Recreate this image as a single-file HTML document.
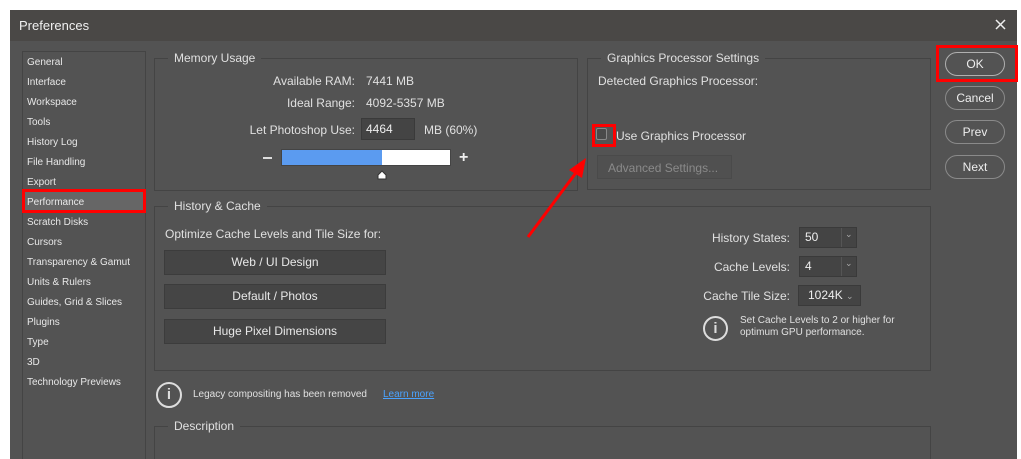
<!DOCTYPE html>
<html style="overflow:hidden;width:1021px;height:459px"><head><style>
*{box-sizing:border-box;margin:0;padding:0}
body{width:1021px;height:459px;background:#fff;position:relative;overflow:hidden;font-family:"Liberation Sans",sans-serif;font-size:12px;color:#e0e0e0}
.a{position:absolute}
.win{left:10px;top:10px;width:1007px;height:449px;background:#535353}
.title{left:10px;top:10px;width:1007px;height:31px;background:#4a4846;color:#f0f0f0;font-size:13px;padding:8px 0 0 9px}
.side{left:22px;top:51px;width:124px;height:420px;border:1px solid #444;background:#535353}
.side div{position:absolute;left:4px;font-size:10px;color:#e8e8e8}
.grp{border:1px solid #444;}
.lg{position:absolute;top:-8px;background:#535353;padding:0 6px;font-size:12px;color:#e0e0e0}
.btn{position:absolute;background:#454545;border:1px solid #3c3c3c;text-align:center;color:#e8e8e8;font-size:12px;padding-top:4px}
.rb{position:absolute;left:945px;width:60px;height:24px;border:1px solid #8a8a8a;border-radius:12px;text-align:center;padding-top:4px;color:#eee;font-size:12px}
.sel{position:absolute;height:21px;background:#444;border:1px solid #3a3a3a;font-size:12px;padding:2px 5px;color:#eee}
.r{text-align:right}
</style></head><body>
<div class="a win"></div>
<div class="a title">Preferences</div>
<svg class="a" style="left:995px;top:19px" width="11" height="11"><path d="M1 1L10 10M10 1L1 10" stroke="#eee" stroke-width="1.5"/></svg>
<div class="a side">
<div style="top:5px">General</div><div style="top:25px">Interface</div><div style="top:45px">Workspace</div><div style="top:65px">Tools</div><div style="top:85px">History Log</div><div style="top:105px">File Handling</div><div style="top:125px">Export</div>
<div style="top:139px;left:0;width:122px;height:22px;background:#666;"></div>
<div style="top:145px">Performance</div><div style="top:165px">Scratch Disks</div><div style="top:185px">Cursors</div><div style="top:205px">Transparency &amp; Gamut</div><div style="top:225px">Units &amp; Rulers</div><div style="top:245px">Guides, Grid &amp; Slices</div><div style="top:265px">Plugins</div><div style="top:285px">Type</div><div style="top:305px">3D</div><div style="top:325px">Technology Previews</div>
</div>
<div class="a" style="left:22px;top:189px;width:124px;height:24px;border:3px solid #f00"></div>

<div class="a grp" style="left:154px;top:58px;width:424px;height:133px"><span class="lg" style="left:13px">Memory Usage</span></div>
<div class="a r" style="left:200px;top:74px;width:155px">Available RAM:</div><div class="a" style="left:366px;top:74px">7441 MB</div>
<div class="a r" style="left:200px;top:96px;width:155px">Ideal Range:</div><div class="a" style="left:366px;top:96px">4092-5357 MB</div>
<div class="a r" style="left:200px;top:123px;width:155px">Let Photoshop Use:</div>
<div class="a" style="left:361px;top:118px;width:54px;height:22px;background:#444;border:1px solid #3a3a3a;padding:3px 4px;color:#eee">4464</div>
<div class="a" style="left:424px;top:123px">MB (60%)</div>
<div class="a" style="left:263px;top:157px;width:9px;height:2px;background:#ddd"></div>
<div class="a" style="left:281px;top:149px;width:170px;height:17px;background:#fff;border:1px solid #444"><div style="width:100px;height:15px;background:#5b9bf0"></div></div>
<div class="a" style="left:459px;top:150px;font-size:16px;line-height:16px;color:#eee;font-weight:bold">+</div>
<svg class="a" style="left:376px;top:169px" width="12" height="11"><path d="M2 10L2 6L6 2L10 6L10 10Z" fill="#fff" stroke="#333" stroke-width="1"/></svg>

<div class="a grp" style="left:587px;top:58px;width:344px;height:132px"><span class="lg" style="left:13px">Graphics Processor Settings</span></div>
<div class="a" style="left:598px;top:74px">Detected Graphics Processor:</div>
<div class="a" style="left:596px;top:128px;width:11px;height:12px;border:1px solid #888;border-radius:2px;background:#4a4a4a"></div>
<div class="a" style="left:592px;top:124px;width:24px;height:23px;border:3px solid #f00"></div>
<div class="a" style="left:616px;top:129px">Use Graphics Processor</div>
<div class="a" style="left:597px;top:155px;width:135px;height:24px;background:#505050;border:1px solid #4a4a4a;color:#8a8a8a;padding:5px 10px">Advanced Settings...</div>

<div class="a" style="left:936px;top:45px;width:82px;height:37px;border:3px solid #f00"></div>
<div class="rb" style="top:52px;border-color:#b0b0b0">OK</div>
<div class="rb" style="top:86px">Cancel</div>
<div class="rb" style="top:120px">Prev</div>
<div class="rb" style="top:155px">Next</div>

<div class="a grp" style="left:154px;top:206px;width:777px;height:165px"><span class="lg" style="left:13px">History &amp; Cache</span></div>
<div class="a" style="left:165px;top:227px">Optimize Cache Levels and Tile Size for:</div>
<div class="btn" style="left:164px;top:250px;width:222px;height:25px">Web / UI Design</div>
<div class="btn" style="left:164px;top:284px;width:222px;height:25px">Default / Photos</div>
<div class="btn" style="left:164px;top:319px;width:222px;height:25px">Huge Pixel Dimensions</div>
<div class="a r" style="left:650px;top:231px;width:140px">History States:</div>
<div class="sel" style="left:799px;top:227px;width:58px">50<span style="position:absolute;left:41px;top:0;width:1px;height:19px;background:#555"></span><span style="position:absolute;left:45px;top:1px;font-size:9px;color:#aaa">⌄</span></div>
<div class="a r" style="left:650px;top:260px;width:140px">Cache Levels:</div>
<div class="sel" style="left:799px;top:256px;width:58px">4<span style="position:absolute;left:41px;top:0;width:1px;height:19px;background:#555"></span><span style="position:absolute;left:45px;top:1px;font-size:9px;color:#aaa">⌄</span></div>
<div class="a r" style="left:650px;top:289px;width:140px">Cache Tile Size:</div>
<div class="sel" style="left:798px;top:285px;width:63px;padding-left:9px">1024K <span style="font-size:9px;color:#aaa">⌄</span></div>
<div class="a" style="left:703px;top:316px;width:25px;height:25px;border:2px solid #ddd;border-radius:50%;text-align:center;font-weight:bold;font-size:15px;line-height:21px;color:#ddd">i</div>
<div class="a" style="left:740px;top:315px;font-size:10px;line-height:12px">Set Cache Levels to 2 or higher for<br>optimum GPU performance.</div>

<div class="a" style="left:156px;top:382px;width:26px;height:26px;border:2px solid #ddd;border-radius:50%;text-align:center;font-weight:bold;font-size:15px;line-height:22px;color:#ddd">i</div>
<div class="a" style="left:193px;top:389px;font-size:10px">Legacy compositing has been removed</div>
<div class="a" style="left:383px;top:389px;font-size:10px;color:#4aa3ff;text-decoration:underline">Learn more</div>

<div class="a" style="left:154px;top:426px;width:777px;height:40px;border-top:1px solid #444;border-left:1px solid #444;border-right:1px solid #444"><span class="lg" style="left:13px">Description</span></div>

<svg class="a" style="left:0;top:0" width="1021" height="459"><line x1="528" y1="237" x2="578" y2="170" stroke="#f00" stroke-width="3"/><polygon points="586,158 569,170 582,178" fill="#f00"/></svg>
</body></html>
